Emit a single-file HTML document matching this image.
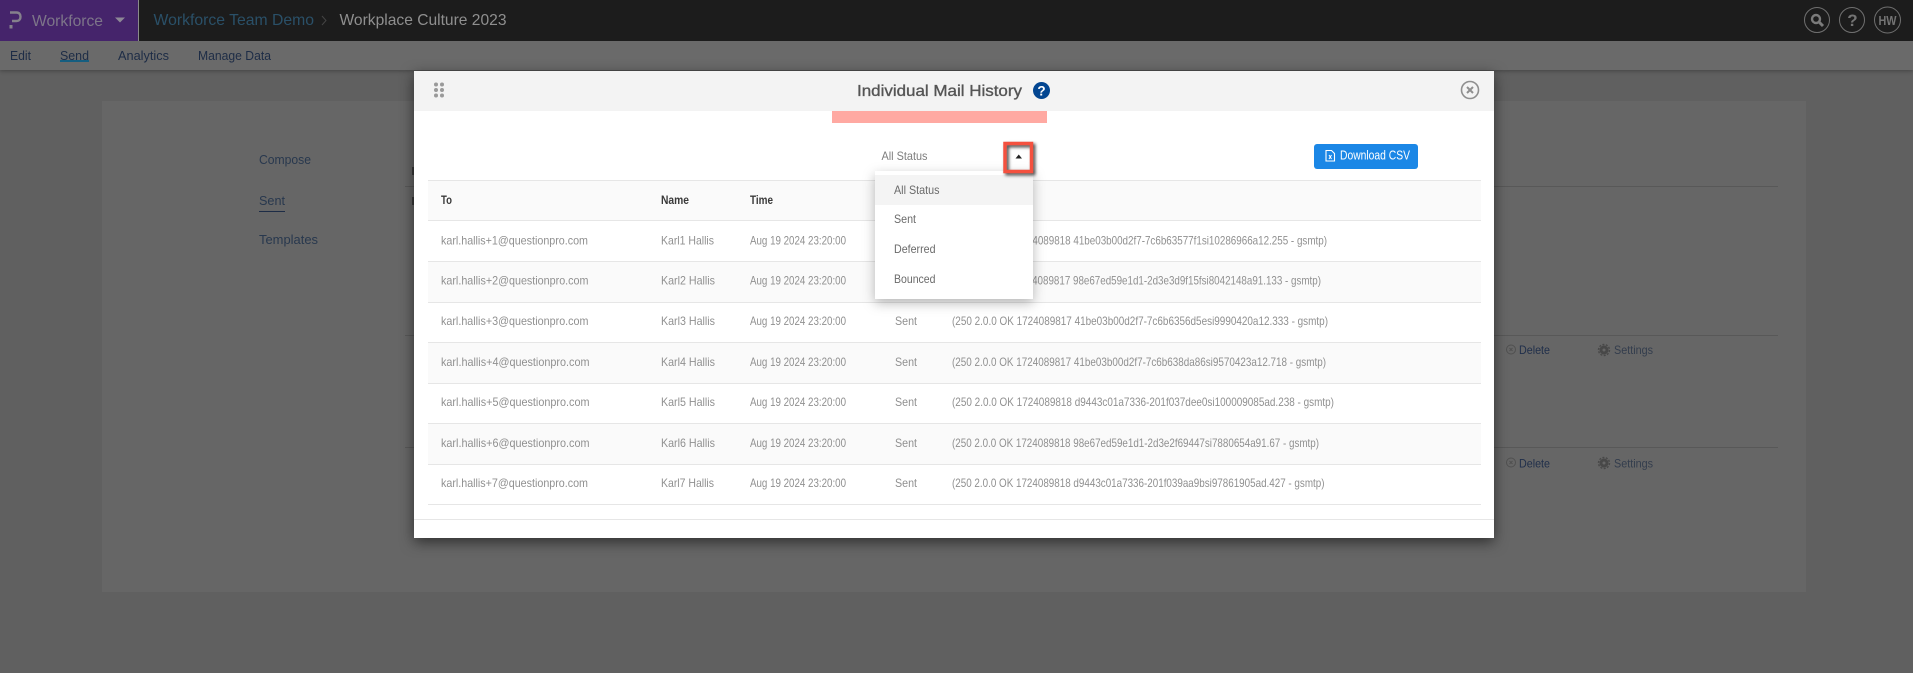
<!DOCTYPE html>
<html lang="en">
<head>
<meta charset="utf-8">
<title>Individual Mail History</title>
<style>
html,body{margin:0;padding:0;width:1913px;height:673px;overflow:hidden;background:#606060}
svg{display:block;font-family:"Liberation Sans",sans-serif}
text{white-space:pre}
.r{font-size:12px;fill:#909090}
.h{font-size:12px;font-weight:bold;fill:#3a3a3a}
.d{font-size:12px;fill:#6a6a6a}
.n{font-size:13px;fill:#1d2c46}
.s{font-size:13px;fill:#28384e}
.b{font-size:12px;fill:#1f2e4a}
</style>
</head>
<body>
<svg width="1913" height="673" viewBox="0 0 1913 673" xmlns="http://www.w3.org/2000/svg">
  <!-- backdrop -->
  <rect width="1913" height="673" fill="#606060"/>
  <rect x="102" y="101" width="1704" height="491" fill="#666666"/>
  <!-- top bar -->
  <rect y="41" width="1913" height="29" fill="#6a6a6a" style="filter:drop-shadow(0 1px 2px rgba(0,0,0,.3))"/>
  <rect width="1913" height="41" fill="#1c1c1c"/>
  <rect width="138" height="41" fill="#45246b"/>
  <rect x="138" width="1" height="41" fill="#8a8a8a"/>
  <path d="M10 12.500h6.500c2.600 0 4 1.800 4 4.200s-1.400 4.300-4 4.300H12" fill="none" stroke="#85808c" stroke-width="2.400"/>
  <rect x="9.500" y="25" width="3" height="3.500" fill="#85808c"/>
  <text x="32" y="26" font-size="16" fill="#7d7589" textLength="71" lengthAdjust="spacingAndGlyphs">Workforce</text>
  <path d="M115 17.500h10l-5 5z" fill="#8d8896"/>
  <text x="153.500" y="25" font-size="16" fill="#2a5068" textLength="160.500" lengthAdjust="spacingAndGlyphs">Workforce Team Demo</text>
  <path d="M322 16l4 4.500-4 4.500" fill="none" stroke="#444" stroke-width="1"/>
  <text x="339.500" y="25" font-size="16" fill="#8f8f8f" textLength="167" lengthAdjust="spacingAndGlyphs">Workplace Culture 2023</text>
  <!-- right icons -->
  <g fill="none" stroke="#707070" stroke-width="1">
    <circle cx="1817" cy="20" r="12.500"/>
    <circle cx="1852" cy="20" r="12.500"/>
    <circle cx="1887.500" cy="20" r="13"/>
  </g>
  <circle cx="1816" cy="19" r="4" fill="none" stroke="#7b7b7b" stroke-width="2.400"/>
  <path d="M1819 22l4 4" stroke="#7b7b7b" stroke-width="3"/>
  <text x="1852.500" y="26" font-size="17" font-weight="bold" fill="#747474" text-anchor="middle">?</text>
  <text x="1878.500" y="25" font-size="13" font-weight="bold" fill="#747474" textLength="18" lengthAdjust="spacingAndGlyphs">HW</text>
  <!-- sub nav -->
  <text class="n" x="10" y="60" textLength="21" lengthAdjust="spacingAndGlyphs">Edit</text>
  <text class="n" x="60" y="60" textLength="29" lengthAdjust="spacingAndGlyphs">Send</text>
  <rect x="60" y="60" width="29" height="2" fill="#155e80"/>
  <text class="n" x="118" y="60" textLength="51" lengthAdjust="spacingAndGlyphs">Analytics</text>
  <text class="n" x="198" y="60" textLength="73" lengthAdjust="spacingAndGlyphs">Manage Data</text>
  <!-- side nav -->
  <text class="s" x="259" y="164" textLength="52" lengthAdjust="spacingAndGlyphs">Compose</text>
  <text class="s" x="259" y="205" textLength="26" lengthAdjust="spacingAndGlyphs">Sent</text>
  <rect x="259" y="211" width="26" height="1" fill="#1d2c46"/>
  <text class="s" x="259" y="244" textLength="59" lengthAdjust="spacingAndGlyphs">Templates</text>
  <!-- content behind dialog -->
  <rect x="405" y="186" width="1373" height="1" fill="#585858"/>
  <rect x="405" y="335" width="1373" height="1" fill="#585858"/>
  <rect x="405" y="447" width="1373" height="1" fill="#585858"/>
  <rect x="412" y="167" width="3" height="8" fill="#3a3a3a"/>
  <rect x="412" y="197" width="3" height="8" fill="#3a3a3a"/>
  <g id="acts">
    <circle cx="1511" cy="349.500" r="4.500" fill="none" stroke="#505050"/>
    <path d="M1509.500 348l3 3m0-3l-3 3" stroke="#505050"/>
    <text class="b" x="1519" y="354" textLength="31" lengthAdjust="spacingAndGlyphs">Delete</text>
    <circle cx="1604" cy="350" r="3" fill="none" stroke="#484848" stroke-width="3"/>
    <circle cx="1604" cy="350" r="5.500" fill="none" stroke="#484848" stroke-width="1.400" stroke-dasharray="2 1.450"/>
    <text x="1614" y="354" font-size="12" fill="#333d4d" textLength="39" lengthAdjust="spacingAndGlyphs">Settings</text>
    <circle cx="1511" cy="462.500" r="4.500" fill="none" stroke="#505050"/>
    <path d="M1509.500 461l3 3m0-3l-3 3" stroke="#505050"/>
    <text class="b" x="1519" y="467.500" textLength="31" lengthAdjust="spacingAndGlyphs">Delete</text>
    <circle cx="1604" cy="463" r="3" fill="none" stroke="#484848" stroke-width="3"/>
    <circle cx="1604" cy="463" r="5.500" fill="none" stroke="#484848" stroke-width="1.400" stroke-dasharray="2 1.450"/>
    <text x="1614" y="467.500" font-size="12" fill="#333d4d" textLength="39" lengthAdjust="spacingAndGlyphs">Settings</text>
  </g>
  <!-- dialog -->
  <rect x="414" y="71" width="1080" height="467" fill="#fff" style="filter:drop-shadow(0 4px 7px rgba(0,0,0,.55))"/>
  <rect x="414" y="71" width="1080" height="40" fill="#f3f3f3"/>
  <g fill="#9a9a9a">
    <circle cx="436" cy="84.500" r="2"/><circle cx="442" cy="84.500" r="2"/>
    <circle cx="436" cy="90" r="2"/><circle cx="442" cy="90" r="2"/>
    <circle cx="436" cy="95.500" r="2"/><circle cx="442" cy="95.500" r="2"/>
  </g>
  <text x="857" y="96" font-size="16" fill="#555" stroke="#555" stroke-width=".35" textLength="165" lengthAdjust="spacingAndGlyphs">Individual Mail History</text>
  <circle cx="1041.500" cy="90.500" r="8.500" fill="#034691"/>
  <text x="1041.500" y="95.500" font-size="13.500" font-weight="bold" fill="#fff" text-anchor="middle">?</text>
  <circle cx="1470" cy="90" r="8.500" fill="none" stroke="#8f8f8f" stroke-width="1.600"/>
  <path d="M1467 87l6 6m0-6l-6 6" stroke="#8f8f8f" stroke-width="2"/>
  <rect x="832" y="111" width="215" height="12" fill="#ffa9a2"/>
  <text x="881.500" y="160" font-size="12" fill="#7d7d7d" textLength="46" lengthAdjust="spacingAndGlyphs">All Status</text>
  <!-- button -->
  <rect x="1314" y="144" width="104" height="25" rx="3" fill="#1b87e6"/>
  <path d="M1326 150.500h5.500l3 3v7.500h-8.500z" fill="none" stroke="#fff" stroke-width="1.100"/>
  <path d="M1329 155l2.500 4m0-4l-2.500 4" stroke="#fff" stroke-width="1"/>
  <text x="1340" y="159.500" font-size="12.500" fill="#fff" textLength="70" lengthAdjust="spacingAndGlyphs">Download CSV</text>
  <!-- table -->
  <rect x="428" y="180" width="1053" height="40" fill="#fafafa"/>
  <rect x="428" y="220" width="1053" height="41" fill="#fff"/>
  <rect x="428" y="261" width="1053" height="41" fill="#fafafa"/>
  <rect x="428" y="342" width="1053" height="41" fill="#fafafa"/>
  <rect x="428" y="423" width="1053" height="41" fill="#fafafa"/>
  <g fill="#e6e6e6">
    <rect x="428" y="180" width="1053" height="1"/>
    <rect x="428" y="220" width="1053" height="1"/>
    <rect x="428" y="261" width="1053" height="1"/>
    <rect x="428" y="302" width="1053" height="1"/>
    <rect x="428" y="342" width="1053" height="1"/>
    <rect x="428" y="383" width="1053" height="1"/>
    <rect x="428" y="423" width="1053" height="1"/>
    <rect x="428" y="464" width="1053" height="1"/>
    <rect x="428" y="504" width="1053" height="1"/>
    <rect x="414" y="519" width="1080" height="1"/>
  </g>
  <text class="h" x="441" y="204" textLength="11" lengthAdjust="spacingAndGlyphs">To</text>
  <text class="h" x="661" y="204" textLength="28" lengthAdjust="spacingAndGlyphs">Name</text>
  <text class="h" x="750" y="204" textLength="23" lengthAdjust="spacingAndGlyphs">Time</text>

  <text class="r" x="441" y="244.500" textLength="147" lengthAdjust="spacingAndGlyphs">karl.hallis+1@questionpro.com</text>
  <text class="r" x="661" y="244.500" textLength="53" lengthAdjust="spacingAndGlyphs">Karl1 Hallis</text>
  <text class="r" x="750" y="244.500" textLength="96" lengthAdjust="spacingAndGlyphs">Aug 19 2024 23:20:00</text>
  <text class="r" x="895" y="244.500" textLength="22" lengthAdjust="spacingAndGlyphs">Sent</text>
  <text class="r" x="952" y="244.500" textLength="375" lengthAdjust="spacingAndGlyphs">(250 2.0.0 OK 1724089818 41be03b00d2f7-7c6b63577f1si10286966a12.255 - gsmtp)</text>

  <text class="r" x="441" y="284.500" textLength="147.500" lengthAdjust="spacingAndGlyphs">karl.hallis+2@questionpro.com</text>
  <text class="r" x="661" y="284.500" textLength="54" lengthAdjust="spacingAndGlyphs">Karl2 Hallis</text>
  <text class="r" x="750" y="284.500" textLength="96" lengthAdjust="spacingAndGlyphs">Aug 19 2024 23:20:00</text>
  <text class="r" x="895" y="284.500" textLength="22" lengthAdjust="spacingAndGlyphs">Sent</text>
  <text class="r" x="952" y="284.500" textLength="369" lengthAdjust="spacingAndGlyphs">(250 2.0.0 OK 1724089817 98e67ed59e1d1-2d3e3d9f15fsi8042148a91.133 - gsmtp)</text>

  <text class="r" x="441" y="325" textLength="147.500" lengthAdjust="spacingAndGlyphs">karl.hallis+3@questionpro.com</text>
  <text class="r" x="661" y="325" textLength="54" lengthAdjust="spacingAndGlyphs">Karl3 Hallis</text>
  <text class="r" x="750" y="325" textLength="96" lengthAdjust="spacingAndGlyphs">Aug 19 2024 23:20:00</text>
  <text class="r" x="895" y="325" textLength="22" lengthAdjust="spacingAndGlyphs">Sent</text>
  <text class="r" x="952" y="325" textLength="376" lengthAdjust="spacingAndGlyphs">(250 2.0.0 OK 1724089817 41be03b00d2f7-7c6b6356d5esi9990420a12.333 - gsmtp)</text>

  <text class="r" x="441" y="366" textLength="148.500" lengthAdjust="spacingAndGlyphs">karl.hallis+4@questionpro.com</text>
  <text class="r" x="661" y="366" textLength="54" lengthAdjust="spacingAndGlyphs">Karl4 Hallis</text>
  <text class="r" x="750" y="366" textLength="96" lengthAdjust="spacingAndGlyphs">Aug 19 2024 23:20:00</text>
  <text class="r" x="895" y="366" textLength="22" lengthAdjust="spacingAndGlyphs">Sent</text>
  <text class="r" x="952" y="366" textLength="374" lengthAdjust="spacingAndGlyphs">(250 2.0.0 OK 1724089817 41be03b00d2f7-7c6b638da86si9570423a12.718 - gsmtp)</text>

  <text class="r" x="441" y="406" textLength="148.500" lengthAdjust="spacingAndGlyphs">karl.hallis+5@questionpro.com</text>
  <text class="r" x="661" y="406" textLength="54" lengthAdjust="spacingAndGlyphs">Karl5 Hallis</text>
  <text class="r" x="750" y="406" textLength="96" lengthAdjust="spacingAndGlyphs">Aug 19 2024 23:20:00</text>
  <text class="r" x="895" y="406" textLength="22" lengthAdjust="spacingAndGlyphs">Sent</text>
  <text class="r" x="952" y="406" textLength="382" lengthAdjust="spacingAndGlyphs">(250 2.0.0 OK 1724089818 d9443c01a7336-201f037dee0si100009085ad.238 - gsmtp)</text>

  <text class="r" x="441" y="447" textLength="148.500" lengthAdjust="spacingAndGlyphs">karl.hallis+6@questionpro.com</text>
  <text class="r" x="661" y="447" textLength="54" lengthAdjust="spacingAndGlyphs">Karl6 Hallis</text>
  <text class="r" x="750" y="447" textLength="96" lengthAdjust="spacingAndGlyphs">Aug 19 2024 23:20:00</text>
  <text class="r" x="895" y="447" textLength="22" lengthAdjust="spacingAndGlyphs">Sent</text>
  <text class="r" x="952" y="447" textLength="367" lengthAdjust="spacingAndGlyphs">(250 2.0.0 OK 1724089818 98e67ed59e1d1-2d3e2f69447si7880654a91.67 - gsmtp)</text>

  <text class="r" x="441" y="487" textLength="147" lengthAdjust="spacingAndGlyphs">karl.hallis+7@questionpro.com</text>
  <text class="r" x="661" y="487" textLength="53" lengthAdjust="spacingAndGlyphs">Karl7 Hallis</text>
  <text class="r" x="750" y="487" textLength="96" lengthAdjust="spacingAndGlyphs">Aug 19 2024 23:20:00</text>
  <text class="r" x="895" y="487" textLength="22" lengthAdjust="spacingAndGlyphs">Sent</text>
  <text class="r" x="952" y="487" textLength="372.500" lengthAdjust="spacingAndGlyphs">(250 2.0.0 OK 1724089818 d9443c01a7336-201f039aa9bsi97861905ad.427 - gsmtp)</text>

  <!-- dropdown -->
  <rect x="875" y="171" width="158" height="128" fill="#fff" style="filter:drop-shadow(0 4px 6px rgba(0,0,0,.28))"/>
  <rect x="875" y="175" width="158" height="30" fill="#f4f4f4"/>
  <text class="d" x="894" y="194" textLength="45.500" lengthAdjust="spacingAndGlyphs">All Status</text>
  <text class="d" x="894" y="223" textLength="22" lengthAdjust="spacingAndGlyphs">Sent</text>
  <text class="d" x="894" y="253" textLength="41.500" lengthAdjust="spacingAndGlyphs">Deferred</text>
  <text class="d" x="894" y="283" textLength="41.500" lengthAdjust="spacingAndGlyphs">Bounced</text>
  <!-- highlighted caret -->
  <path d="M1015.500 158.500h6.500l-3.250-4z" fill="#222"/>
  <rect x="1005" y="143.500" width="26.500" height="28" fill="none" stroke="#f4513f" stroke-width="3.500" style="filter:drop-shadow(2px 2px 1.500px rgba(0,0,0,.75))"/>
</svg>
</body>
</html>
